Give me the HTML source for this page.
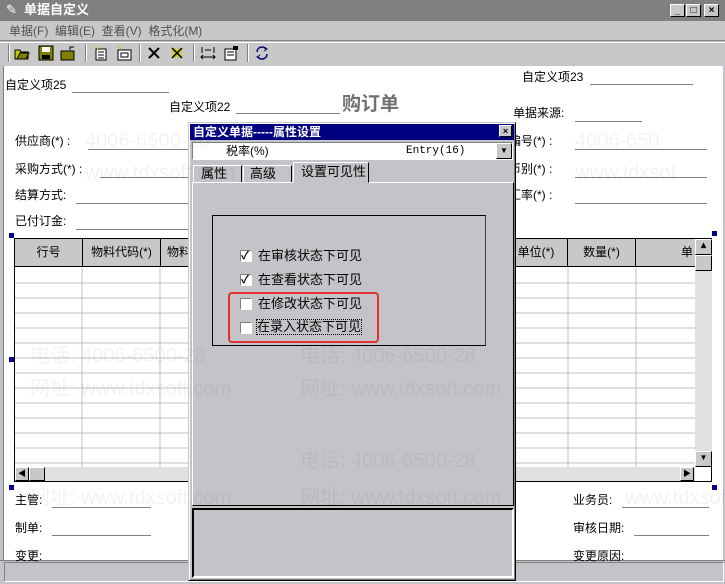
<!DOCTYPE html>
<html><head><meta charset="utf-8">
<style>
*{margin:0;padding:0;box-sizing:border-box}
body{width:725px;height:584px;overflow:hidden;background:#c4c4c8;font-family:"Liberation Sans","Noto Sans CJK SC","WenQuanYi Zen Hei",sans-serif;font-size:12px;color:#000;position:relative}
.a{position:absolute}
.t{position:absolute;white-space:nowrap;font-size:12px;line-height:14px}
.ul{position:absolute;height:1px;background:#808080}
.wm{position:absolute;color:rgba(0,0,0,0.05);font-size:20px;white-space:nowrap;line-height:22px}
.btn{position:absolute;width:15px;height:13px;background:#c8c8c8;border:1px solid;border-color:#fff #000 #000 #fff;font-size:10px;line-height:11px;text-align:center;font-weight:bold}
.hd{position:absolute;top:239px;height:28px;background:#c8c8c8;border-right:1px solid #000;font-size:12px;line-height:26px;text-align:center;white-space:nowrap;overflow:hidden}
.ico{position:absolute;top:45px;width:16px;height:16px}
.sep{position:absolute;top:44px;width:2px;height:18px;border-left:1px solid #808080;border-right:1px solid #fff}
</style></head><body>
<div class="a" style="left:0;top:0;width:725px;height:21px;background:#808080"></div>
<div class="t" style="left:6px;top:3px;color:#fff;font-size:13px">✎</div>
<div class="t" style="left:24px;top:3px;color:#fff;font-weight:bold;font-size:13px">单据自定义</div>
<div class="btn" style="left:670px;top:4px">_</div>
<div class="btn" style="left:686px;top:4px">□</div>
<div class="btn" style="left:704px;top:4px">×</div>
<div class="a" style="left:0;top:21px;width:725px;height:20px;background:#c8c8c8;border-bottom:1px solid #808080"></div>
<div class="t" style="left:9px;top:24px;color:#505050">单据(F)&nbsp;&nbsp;编辑(E)&nbsp;&nbsp;查看(V)&nbsp;&nbsp;格式化(M)</div>
<div class="a" style="left:0;top:42px;width:725px;height:23px;background:#c8c8c8;border-top:1px solid #fff"></div>
<div class="sep" style="left:8px"></div>
<svg class="ico" style="left:14px" viewBox="0 0 16 16"><path d="M1 5h5l1 2h7v7H1z" fill="#c8c800" stroke="#000"/><path d="M3 14l3-6h9l-3 6z" fill="#808000" stroke="#000"/></svg>
<svg class="ico" style="left:38px" viewBox="0 0 16 16"><rect x="1" y="1" width="14" height="14" fill="#808000" stroke="#000"/><rect x="4" y="2" width="8" height="5" fill="#fff"/><rect x="4" y="10" width="8" height="4" fill="#000"/></svg>
<svg class="ico" style="left:60px" viewBox="0 0 16 16"><rect x="1" y="6" width="13" height="9" fill="#808000" stroke="#000"/><path d="M10 5V2h4" fill="none" stroke="#000"/></svg>
<div class="sep" style="left:85px"></div>
<svg class="ico" style="left:93px" viewBox="0 0 16 16"><rect x="3" y="4" width="10" height="11" fill="#fff" stroke="#000"/><path d="M5 7h6M5 10h6M5 13h6" stroke="#000"/><path d="M2 1l3 3" stroke="#cc0"/></svg>
<svg class="ico" style="left:116px" viewBox="0 0 16 16"><rect x="2" y="5" width="13" height="10" fill="#fff" stroke="#000"/><rect x="5" y="8" width="7" height="4" fill="none" stroke="#000"/><path d="M2 1l3 3" stroke="#cc0"/></svg>
<div class="sep" style="left:139px"></div>
<svg class="ico" style="left:146px" viewBox="0 0 16 16"><path d="M3 3l10 10M13 3L3 13" stroke="#000" stroke-width="2"/></svg>
<svg class="ico" style="left:169px" viewBox="0 0 16 16"><path d="M4 4l8 8M12 4l-8 8" stroke="#cc0" stroke-width="4"/><path d="M3 3l10 10M13 3L3 13" stroke="#000" stroke-width="1.5"/></svg>
<div class="sep" style="left:193px"></div>
<svg class="ico" style="left:200px" viewBox="0 0 16 16"><path d="M2 2v6M14 2v6M5 5h6M1 12h14M3 10l-2 2 2 2M13 10l2 2-2 2" stroke="#000" fill="none"/></svg>
<svg class="ico" style="left:223px" viewBox="0 0 16 16"><rect x="2" y="4" width="11" height="11" fill="#fff" stroke="#000"/><path d="M4 7h7M4 10h7" stroke="#000"/><rect x="10" y="1" width="5" height="4" fill="#000"/></svg>
<div class="sep" style="left:247px"></div>
<svg class="ico" style="left:254px" viewBox="0 0 16 16"><path d="M3 7a5 5 0 0 1 9-3M13 9a5 5 0 0 1-9 3" stroke="#000080" stroke-width="1.5" fill="none"/><path d="M10 2l3 2-3 2M6 14l-3-2 3-2" stroke="#000080" fill="none"/></svg>
<div class="a" style="left:3px;top:66px;width:720px;height:494px;background:#fff;border-left:1px solid #808080"></div>
<div class="a" style="left:0;top:560px;width:725px;height:24px;background:#c4c4c8;border-top:1px solid #808080"></div>
<div class="a" style="left:4px;top:562px;width:720px;height:20px;border:1px solid;border-color:#808080 #fff #fff #808080"></div>
<div class="t" style="left:5px;top:78px">自定义项25</div><div class="ul" style="left:72px;top:92px;width:97px"></div>
<div class="t" style="left:169px;top:100px">自定义项22</div><div class="ul" style="left:236px;top:113px;width:104px"></div>
<div class="t" style="left:342px;top:94px;font-size:19px;line-height:22px;color:#707070;font-weight:bold">购订单</div>
<div class="t" style="left:522px;top:70px">自定义项23</div><div class="ul" style="left:590px;top:84px;width:103px"></div>
<div class="t" style="left:513px;top:106px">单据来源:</div><div class="ul" style="left:575px;top:121px;width:67px"></div>
<div class="t" style="left:509px;top:134px">编号(*) :</div><div class="ul" style="left:575px;top:149px;width:132px"></div>
<div class="t" style="left:509px;top:162px">币别(*) :</div><div class="ul" style="left:575px;top:177px;width:132px"></div>
<div class="t" style="left:509px;top:188px">汇率(*) :</div><div class="ul" style="left:575px;top:203px;width:132px"></div>
<div class="t" style="left:15px;top:134px">供应商(*) :</div><div class="ul" style="left:88px;top:149px;width:100px"></div>
<div class="t" style="left:15px;top:162px">采购方式(*) :</div><div class="ul" style="left:100px;top:177px;width:88px"></div>
<div class="t" style="left:15px;top:188px">结算方式:</div><div class="ul" style="left:76px;top:203px;width:112px"></div>
<div class="t" style="left:15px;top:214px">已付订金:</div><div class="ul" style="left:76px;top:229px;width:112px"></div>
<div class="a" style="left:14px;top:238px;width:698px;height:244px;border:1px solid #000;background:#fff;overflow:hidden">
<svg class="a" style="left:0;top:0" width="698" height="244"><g stroke="#c0c0c0">
<path d="M0 44h698M0 59h698M0 74h698M0 89h698M0 104h698M0 119h698M0 134h698M0 149h698M0 164h698M0 179h698M0 194h698M0 209h698M0 224h698"/>
<path d="M67 28v216M145 28v216M490 28v216M553 28v216M621 28v216"/></g></svg>
</div>
<div class="hd" style="left:15px;width:68px">行号</div>
<div class="hd" style="left:83px;width:78px">物料代码(*)</div>
<div class="hd" style="left:161px;width:60px;text-align:left;padding-left:6px;border-right:none">物料名称</div>
<div class="hd" style="left:505px;width:63px">单位(*)</div>
<div class="hd" style="left:568px;width:68px">数量(*)</div>
<div class="hd" style="left:636px;width:60px;text-align:right;padding-right:2px">单</div>
<div class="a" style="left:15px;top:266px;width:680px;height:1px;background:#000"></div>
<div class="a" style="left:695px;top:239px;width:17px;height:228px;background:#e0e0e0"></div>
<div class="btn" style="left:695px;top:239px;width:17px;height:16px">▴</div>
<div class="btn" style="left:695px;top:255px;width:17px;height:16px"></div>
<div class="btn" style="left:695px;top:451px;width:17px;height:16px;font-size:8px">▼</div>
<div class="a" style="left:15px;top:467px;width:680px;height:14px;background:#e0e0e0"></div>
<div class="btn" style="left:15px;top:467px;width:14px;height:14px;font-size:8px">◀</div>
<div class="btn" style="left:29px;top:467px;width:16px;height:14px"></div>
<div class="btn" style="left:680px;top:467px;width:14px;height:14px;font-size:8px">▶</div>
<div class="a" style="left:9px;top:233px;width:5px;height:5px;background:#00008b"></div>
<div class="a" style="left:712px;top:231px;width:5px;height:5px;background:#00008b"></div>
<div class="a" style="left:9px;top:357px;width:5px;height:5px;background:#00008b"></div>
<div class="a" style="left:9px;top:485px;width:5px;height:5px;background:#00008b"></div>
<div class="a" style="left:712px;top:485px;width:5px;height:5px;background:#00008b"></div>
<div class="t" style="left:15px;top:493px">主管:</div><div class="ul" style="left:52px;top:507px;width:99px"></div>
<div class="t" style="left:15px;top:521px">制单:</div><div class="ul" style="left:52px;top:535px;width:99px"></div>
<div class="t" style="left:15px;top:549px">变更:</div>
<div class="t" style="left:573px;top:493px">业务员:</div><div class="ul" style="left:622px;top:507px;width:87px"></div>
<div class="t" style="left:573px;top:521px">审核日期:</div><div class="ul" style="left:634px;top:535px;width:75px"></div>
<div class="t" style="left:573px;top:549px">变更原因:</div>
<div class="a" style="left:188px;top:122px;width:328px;height:459px;background:#c4c4c8;border:1px solid;border-color:#c8c8c8 #000 #000 #c8c8c8;box-shadow:inset 1px 1px #fff,inset -1px -1px #808080"></div>
<div class="a" style="left:190px;top:124px;width:324px;height:16px;background:#000080"></div>
<div class="t" style="left:193px;top:125px;color:#fff;font-weight:bold">自定义单据-----属性设置</div>
<div class="btn" style="left:499px;top:125px;width:13px;height:12px;font-size:9px">×</div>
<div class="a" style="left:192px;top:142px;width:321px;height:18px;background:#fff;border:1px solid;border-color:#808080 #fff #fff #808080"></div>
<div class="t" style="left:226px;top:144px">税率(%)</div>
<div class="t" style="left:406px;top:144px;font-family:'Liberation Mono',monospace;font-size:11px">Entry(16)</div>
<div class="btn" style="left:496px;top:143px;width:16px;height:16px;font-size:8px;line-height:14px">▼</div>
<div class="a" style="left:193px;top:165px;width:49px;height:18px;border:1px solid;border-color:#fff #000 transparent #fff"></div>
<div class="t" style="left:201px;top:167px;font-size:13px">属性</div>
<div class="a" style="left:243px;top:165px;width:49px;height:18px;border:1px solid;border-color:#fff #000 transparent #fff"></div>
<div class="t" style="left:250px;top:167px;font-size:13px">高级</div>
<div class="a" style="left:293px;top:162px;width:76px;height:21px;border:1px solid;border-color:#fff #000 transparent #fff;background:#c4c4c8;z-index:2"></div>
<div class="t" style="left:301px;top:165px;font-size:13px;z-index:3">设置可见性</div>
<div class="a" style="left:192px;top:182px;width:322px;height:324px;border:1px solid;border-color:#fff #000 #000 #fff"></div>
<div class="a" style="left:212px;top:215px;width:274px;height:131px;border:1px solid #000;border-right-color:#404040"></div>
<div class="a" style="left:240px;top:250px;width:12px;height:12px;background:#fff;border:1px solid;border-color:#808080 #fff #fff #808080;font-size:11px;line-height:10px;font-weight:bold">✓</div>
<div class="t" style="left:258px;top:249px;font-size:13px">在审核状态下可见</div>
<div class="a" style="left:240px;top:274px;width:12px;height:12px;background:#fff;border:1px solid;border-color:#808080 #fff #fff #808080;font-size:11px;line-height:10px;font-weight:bold">✓</div>
<div class="t" style="left:258px;top:273px;font-size:13px">在查看状态下可见</div>
<div class="a" style="left:240px;top:298px;width:12px;height:12px;background:#fff;border:1px solid;border-color:#808080 #fff #fff #808080"></div>
<div class="t" style="left:258px;top:297px;font-size:13px">在修改状态下可见</div>
<div class="a" style="left:240px;top:322px;width:12px;height:12px;background:#fff;border:1px solid;border-color:#808080 #fff #fff #808080"></div>
<div class="t" style="left:257px;top:320px;font-size:13px;outline:1px dotted #000">在录入状态下可见</div>
<div class="a" style="left:228px;top:292px;width:151px;height:51px;border:2px solid #e03030;border-radius:4px"></div>
<div class="a" style="left:192px;top:508px;width:322px;height:70px;border:2px solid;border-color:#000 #fff #fff #000;background:#c4c4c8"></div>
<div class="wm" style="left:85px;top:130px">4006-6500-28</div>
<div class="wm" style="left:85px;top:162px">www.tdxsoft.com</div>
<div class="wm" style="left:575px;top:130px">4006-650</div>
<div class="wm" style="left:575px;top:162px">www.tdxsof</div>
<div class="wm" style="left:30px;top:345px">电话: 4006-6500-28</div>
<div class="wm" style="left:30px;top:378px">网址: www.tdxsoft.com</div>
<div class="wm" style="left:300px;top:345px">电话: 4006-6500-28</div>
<div class="wm" style="left:300px;top:378px">网址: www.tdxsoft.com</div>
<div class="wm" style="left:300px;top:450px">电话: 4006-6500-28</div>
<div class="wm" style="left:300px;top:487px">网址: www.tdxsoft.com</div>
<div class="wm" style="left:30px;top:487px">网址: www.tdxsoft.com</div>
<div class="wm" style="left:625px;top:487px">www.tdxsof</div>
</body></html>
